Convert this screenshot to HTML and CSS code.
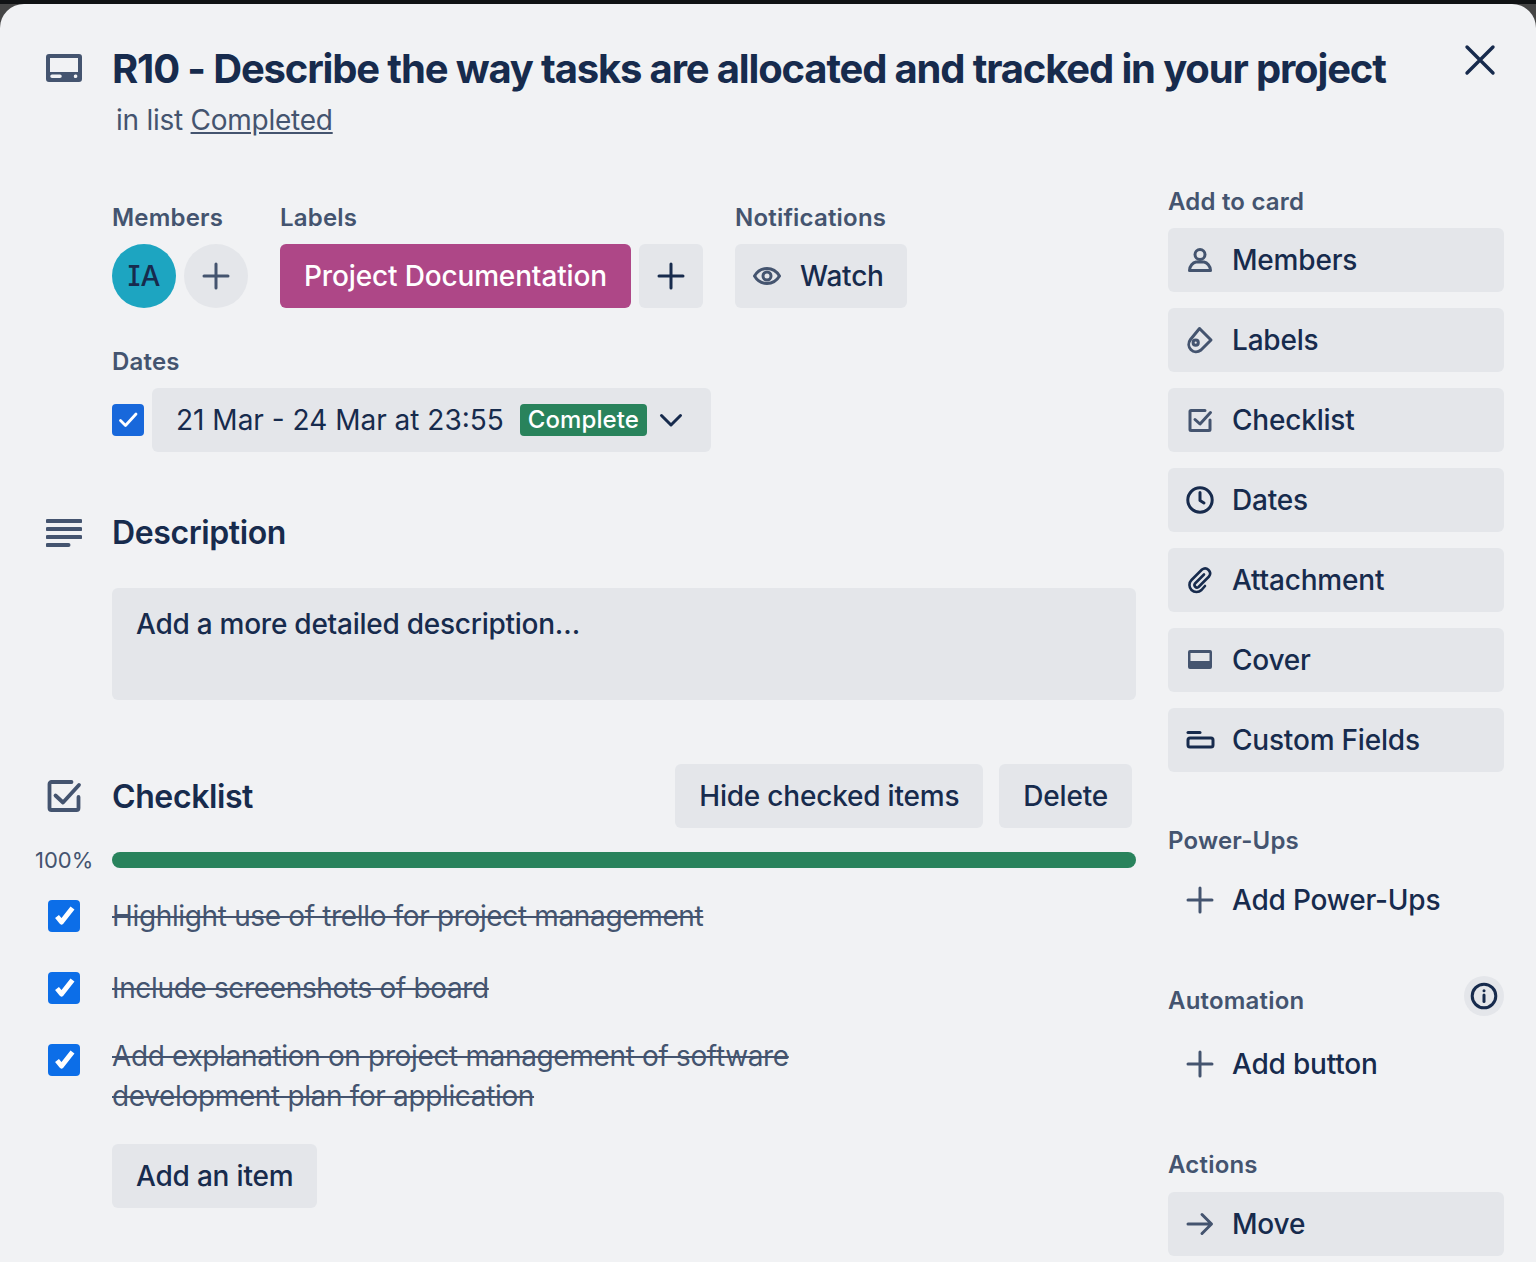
FILE: index.html
```html
<!DOCTYPE html>
<html lang="en">
<head>
    <meta charset="UTF-8">
    <meta name="viewport" content="width=device-width, initial-scale=1.0">
    <title>R10 - Card</title>
    <link rel="stylesheet" href="styles.css">
</head>
<body>
    <div class="card">
        <header class="card-header">
            <svg class="header-icon" width="36" height="28" viewBox="0 0 36 28">
                <path fill="#44546f" fill-rule="evenodd" d="M3 0h30a3 3 0 0 1 3 3v22a3 3 0 0 1-3 3H3a3 3 0 0 1-3-3V3a3 3 0 0 1 3-3zM4 4v14h28V4zM6 20.500a1.500 1.500 0 0 0 0 3.500h8a1.500 1.500 0 0 0 0-3.500zM30 20.500a1.800 1.800 0 1 0 0 3.500 1.800 1.800 0 0 0 0-3.500z"/>
            </svg>
            <div>
                <h1>R10 - Describe the way tasks are allocated and tracked in your project</h1>
                <p class="in-list">in list <a href="#">Completed</a></p>
            </div>
            <svg class="close-icon" width="32" height="32" viewBox="0 0 32 32">
                <path d="M3 3l26 26M29 3L3 29" stroke="#172b4d" stroke-width="3.400" stroke-linecap="round" fill="none"/>
            </svg>
        </header>

        <div class="card-body">
            <main class="main-col">
                <div class="meta-row">
                    <div class="meta-group members-group">
                        <h3 class="small-title">Members</h3>
                        <div class="meta-items">
                            <span class="avatar">IA</span>
                            <span class="round-btn">
                                <svg width="32" height="32" viewBox="0 0 32 32"><path d="M16 4v24M4 16h24" class="stroke"/></svg>
                            </span>
                        </div>
                    </div>
                    <div class="meta-group labels-group">
                        <h3 class="small-title">Labels</h3>
                        <div class="meta-items">
                            <span class="label-chip">Project Documentation</span>
                            <span class="square-btn">
                                <svg width="32" height="32" viewBox="0 0 32 32"><path d="M16 4v24M4 16h24" class="stroke dark"/></svg>
                            </span>
                        </div>
                    </div>
                    <div class="meta-group">
                        <h3 class="small-title">Notifications</h3>
                        <div class="meta-items">
                            <span class="btn watch-btn">
                                <svg width="32" height="32" viewBox="0 0 32 32">
                                    <path d="M3.500 16C6.500 11 11 8.500 16 8.500S25.500 11 28.500 16C25.500 21 21 23.500 16 23.500S6.500 21 3.500 16z" class="stroke"/>
                                    <circle cx="16" cy="16" r="4" class="stroke"/>
                                </svg>
                                Watch
                            </span>
                        </div>
                    </div>
                </div>

                <div class="dates-block">
                    <h3 class="small-title">Dates</h3>
                    <div class="dates-row">
                        <span class="date-check">
                            <svg width="32" height="32" viewBox="0 0 32 32"><path d="M8.500 16.500l5 5L24 10" fill="none" stroke="#fff" stroke-width="2.800" stroke-linecap="round" stroke-linejoin="round"/></svg>
                        </span>
                        <span class="btn date-btn">
                            21 Mar - 24 Mar at 23:55
                            <span class="badge">Complete</span>
                            <svg width="24" height="16" viewBox="0 0 24 16"><path d="M2.500 3.500L12 13l9.500-9.500" class="stroke dark"/></svg>
                        </span>
                    </div>
                </div>

                <section class="description">
                    <div class="section-head">
                        <svg class="section-icon" width="36" height="28" viewBox="0 0 36 28">
                            <path d="M1.500 2h33M1.500 10h33M1.500 18h33M1.500 26h21" stroke="#44546f" stroke-width="4" stroke-linecap="round" fill="none"/>
                        </svg>
                        <h2>Description</h2>
                    </div>
                    <div class="desc-box">Add a more detailed description…</div>
                </section>

                <section class="checklist">
                    <div class="section-head check-head">
                        <svg class="section-icon" width="36" height="32" viewBox="0 0 36 32">
                            <path d="M25.500 2H5.500a2 2 0 0 0-2 2v24a2 2 0 0 0 2 2h25a2 2 0 0 0 2-2V17" fill="none" stroke="#44546f" stroke-width="3.800" stroke-linecap="round"/>
                            <path d="M9.500 15.500l7.500 7L33 5" fill="none" stroke="#44546f" stroke-width="3.800" stroke-linecap="round" stroke-linejoin="round"/>
                        </svg>
                        <h2>Checklist</h2>
                        <div class="check-actions">
                            <span class="btn">Hide checked items</span>
                            <span class="btn">Delete</span>
                        </div>
                    </div>
                    <div class="progress-row">
                        <span class="percent">100%</span>
                        <div class="progress-track"><div class="progress-fill"></div></div>
                    </div>
                    <div class="check-item">
                        <span class="tick"><svg width="32" height="32" viewBox="0 0 32 32"><path d="M9 16.500l4.500 5.500L24.500 8" class="tick-mark"/></svg></span>
                        <span class="item-text">Highlight use of trello for project management</span>
                    </div>
                    <div class="check-item roomy">
                        <span class="tick"><svg width="32" height="32" viewBox="0 0 32 32"><path d="M9 16.500l4.500 5.500L24.500 8" class="tick-mark"/></svg></span>
                        <span class="item-text">Include screenshots of board</span>
                    </div>
                    <div class="check-item wrapped">
                        <span class="tick"><svg width="32" height="32" viewBox="0 0 32 32"><path d="M9 16.500l4.500 5.500L24.500 8" class="tick-mark"/></svg></span>
                        <span class="item-text">Add explanation on project management of software development plan for application</span>
                    </div>
                    <span class="btn add-item">Add an item</span>
                </section>
            </main>

            <aside class="side-col">
                <h3 class="small-title">Add to card</h3>
                <div class="side-list">
                    <span class="btn side-btn">
                        <svg width="32" height="32" viewBox="0 0 32 32">
                            <circle cx="16" cy="10.500" r="5" class="stroke"/>
                            <path d="M5.500 26.500C5.500 22 9 18.500 12 18h8c3 .5 6.500 4 6.500 8.500z" class="stroke"/>
                        </svg>
                        Members
                    </span>
                    <span class="btn side-btn">
                        <svg width="32" height="32" viewBox="0 0 32 32">
                            <path d="M15.500 4.500L27 16 17 26c-3.500 2.700-7.500 2.200-10-.3-2.700-2.700-3-7-.5-10.200z" class="stroke"/>
                            <circle cx="11.700" cy="18.700" r="2.600" class="stroke"/>
                        </svg>
                        Labels
                    </span>
                    <span class="btn side-btn">
                        <svg width="32" height="32" viewBox="0 0 32 32">
                            <path d="M21 6.500H7a1 1 0 0 0-1 1v18a1 1 0 0 0 1 1h18a1 1 0 0 0 1-1V16" class="stroke"/>
                            <path d="M11 15.500l5 4.500 10.500-11.500" class="stroke"/>
                        </svg>
                        Checklist
                    </span>
                    <span class="btn side-btn">
                        <svg width="32" height="32" viewBox="0 0 32 32">
                            <circle cx="16" cy="16" r="12.200" class="stroke dark"/>
                            <path d="M16 8.500V16.500L20 19" class="stroke dark"/>
                        </svg>
                        Dates
                    </span>
                    <span class="btn side-btn">
                        <svg width="32" height="32" viewBox="0 0 32 32">
                            <path d="M20 10.500L11 19.500a2.500 2.500 0 0 0 3.500 3.500L25 12.500a5 5 0 0 0-7-7L7.500 16a7 7 0 0 0 10 10L21 22" fill="none" stroke="#172b4d" stroke-width="2.600" stroke-linecap="round" stroke-linejoin="round"/>
                        </svg>
                        Attachment
                    </span>
                    <span class="btn side-btn">
                        <svg width="32" height="32" viewBox="0 0 32 32">
                            <path fill="#44546f" fill-rule="evenodd" d="M6 6h20a2 2 0 0 1 2 2v15a2 2 0 0 1-2 2H6a2 2 0 0 1-2-2V8a2 2 0 0 1 2-2zM6.500 9v8h19V9z"/>
                        </svg>
                        Cover
                    </span>
                    <span class="btn side-btn">
                        <svg width="32" height="32" viewBox="0 0 32 32">
                            <path d="M4 8.500h12" class="stroke dark"/>
                            <rect x="4" y="14" width="25" height="9" rx="2" class="stroke dark"/>
                        </svg>
                        Custom Fields
                    </span>
                </div>

                <h3 class="small-title powerups-title">Power-Ups</h3>
                <span class="btn side-btn plain">
                    <svg width="32" height="32" viewBox="0 0 32 32"><path d="M16 4v24M4 16h24" class="stroke"/></svg>
                    Add Power-Ups
                </span>

                <div class="automation-head">
                    <h3 class="small-title">Automation</h3>
                    <span class="info-btn">
                        <svg width="28" height="28" viewBox="0 0 28 28">
                            <circle cx="14" cy="14" r="11.800" class="stroke dark"/>
                            <path d="M14 13v6.500" class="stroke dark"/>
                            <circle cx="14" cy="8.800" r="1.500" fill="#172b4d"/>
                        </svg>
                    </span>
                </div>
                <span class="btn side-btn plain">
                    <svg width="32" height="32" viewBox="0 0 32 32"><path d="M16 4v24M4 16h24" class="stroke"/></svg>
                    Add button
                </span>

                <h3 class="small-title actions-title">Actions</h3>
                <span class="btn side-btn">
                    <svg width="32" height="32" viewBox="0 0 32 32"><path d="M4 16h23M18 6.500L27.500 16 18 25.500" class="stroke"/></svg>
                    Move
                </span>
            </aside>
        </div>
    </div>
</body>
</html>
```

FILE: styles.css
```css
* {
    box-sizing: border-box;
}

html, body {
    height: 100%;
}

body {
    margin: 0;
    background-color: #454545;
    border-top: 4px solid #101214;
    overflow: hidden;
    font-family: "Inter", "Liberation Sans", sans-serif;
    color: #172b4d;
}

.card {
    position: relative;
    height: 1258px;
    background-color: #f1f2f4;
    border-radius: 24px 24px 0 0;
    overflow: hidden;
}

svg {
    display: block;
    flex: none;
}

.stroke {
    fill: none;
    stroke: #44546f;
    stroke-width: 3;
    stroke-linecap: round;
    stroke-linejoin: round;
}

.stroke.dark {
    stroke: #172b4d;
}

/* header */
.card-header {
    display: flex;
    padding-top: 41px;
}

.header-icon {
    margin: 9px 30px 0 46px;
}

h1 {
    margin: 0;
    font-size: 40px;
    line-height: 48px;
    font-weight: 700;
    letter-spacing: -1.16px;
    white-space: nowrap;
}

.in-list {
    margin: 7px 0 0 4px;
    font-size: 28px;
    line-height: 40px;
    letter-spacing: -0.25px;
    color: #44546f;
}

.in-list a {
    color: #44546f;
}

.close-icon {
    position: absolute;
    top: 40px;
    right: 40px;
}

/* columns */
.card-body {
    display: grid;
    grid-template-columns: 1136px 336px;
    column-gap: 32px;
}

.main-col {
    padding: 62px 0 0 112px;
}

.side-col {
    padding-top: 46px;
}

.small-title {
    margin: 0;
    font-size: 24px;
    line-height: 32px;
    font-weight: 600;
    letter-spacing: 0.2px;
    color: #44546f;
}

.btn {
    display: inline-flex;
    align-items: center;
    height: 64px;
    padding: 0 24px;
    border-radius: 6px;
    background-color: #e4e6ea;
    font-size: 28px;
    font-weight: 500;
    letter-spacing: -0.2px;
    white-space: nowrap;
}

/* members, labels, notifications */
.meta-row {
    display: flex;
}

.members-group {
    width: 168px;
}

.labels-group {
    width: 455px;
}

.meta-items {
    display: flex;
    gap: 8px;
    margin-top: 10px;
}

.avatar, .round-btn {
    display: flex;
    align-items: center;
    justify-content: center;
    width: 64px;
    height: 64px;
    border-radius: 50%;
}

.avatar {
    background-color: #1da5c1;
    font-size: 28px;
    font-weight: 500;
    font-feature-settings: "cv08";
}

.round-btn {
    background-color: #e4e6ea;
}

.label-chip {
    display: flex;
    align-items: center;
    height: 64px;
    padding: 0 24px;
    border-radius: 6px;
    background-color: #ae4787;
    color: #fff;
    font-size: 28px;
    font-weight: 500;
    letter-spacing: -0.15px;
    white-space: nowrap;
}

.square-btn {
    display: flex;
    align-items: center;
    justify-content: center;
    width: 64px;
    height: 64px;
    border-radius: 6px;
    background-color: #e4e6ea;
}

.watch-btn {
    padding: 0 23px 0 16px;
    gap: 17px;
}

/* dates */
.dates-block {
    margin-top: 38px;
}

.dates-row {
    display: flex;
    align-items: center;
    gap: 8px;
    margin-top: 10px;
}

.date-check {
    width: 32px;
    height: 32px;
    border-radius: 4px;
    background-color: #1868db;
}

.date-btn {
    padding: 0 28px 0 24px;
    font-weight: 400;
    letter-spacing: 0;
}

.badge {
    margin-left: 16px;
    margin-right: 12px;
    padding: 0 8px;
    height: 32px;
    line-height: 32px;
    border-radius: 4px;
    background-color: #29835c;
    color: #fff;
    font-size: 24px;
    font-weight: 500;
    letter-spacing: 0.1px;
}

/* sections */
.section-head {
    position: relative;
    display: flex;
    align-items: center;
}

.section-icon {
    position: absolute;
    left: -66px;
}

h2 {
    margin: 0;
    font-size: 32px;
    line-height: 40px;
    font-weight: 600;
    letter-spacing: -0.4px;
}

.check-head h2 {
    margin-top: 2px;
}

.description {
    margin-top: 61px;
}

.desc-box {
    height: 112px;
    margin-top: 35px;
    padding: 16px 24px;
    border-radius: 6px;
    background-color: #e4e6ea;
    font-size: 28px;
    line-height: 40px;
    font-weight: 500;
    letter-spacing: -0.25px;
}

.checklist {
    margin-top: 64px;
}

.check-head {
    height: 64px;
}

.check-actions {
    display: flex;
    gap: 16px;
    margin-left: auto;
    margin-right: 4px;
}

.progress-row {
    position: relative;
    display: flex;
    align-items: center;
    margin-top: 24px;
    height: 16px;
}

.percent {
    position: absolute;
    left: -77px;
    font-size: 22px;
    color: #44546f;
}

.progress-track {
    flex: 1;
    height: 16px;
    border-radius: 8px;
    background-color: #e4e6ea;
}

.progress-fill {
    height: 100%;
    border-radius: 8px;
    background-color: #29835c;
}

.check-item {
    position: relative;
    margin-top: 28px;
}

.check-item.roomy {
    margin-top: 32px;
}

.tick {
    position: absolute;
    left: -64px;
    top: 4px;
    width: 32px;
    height: 32px;
    border-radius: 4px;
    background-color: #0c6ee8;
}

.check-item.wrapped .tick {
    top: 8px;
}

.tick-mark {
    fill: none;
    stroke: #fff;
    stroke-width: 5;
    stroke-linejoin: round;
}

.item-text {
    display: block;
    max-width: 720px;
    font-size: 28px;
    line-height: 40px;
    letter-spacing: -0.35px;
    color: #44546f;
    text-decoration: line-through;
}

.add-item {
    margin-top: 28px;
}

/* sidebar */
.side-list {
    display: flex;
    flex-direction: column;
    gap: 16px;
    margin-top: 10px;
}

.side-btn {
    display: flex;
    gap: 16px;
    padding: 0 16px;
}

.side-btn.plain {
    background: none;
    margin-top: 11px;
}

.powerups-title {
    margin-top: 53px;
}

.automation-head {
    display: flex;
    justify-content: space-between;
    height: 40px;
    margin-top: 44px;
}

.automation-head .small-title {
    margin-top: 9px;
}

.info-btn {
    display: flex;
    align-items: center;
    justify-content: center;
    width: 40px;
    height: 40px;
    border-radius: 50%;
    background-color: #e4e6ea;
}

.automation-head + .side-btn.plain {
    margin-top: 16px;
}

.actions-title {
    margin-top: 53px;
}

.actions-title + .side-btn {
    margin-top: 11px;
}
```
